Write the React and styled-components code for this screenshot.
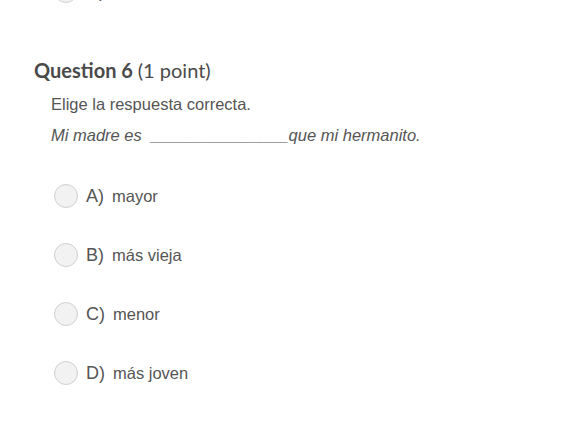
import React from "react";
import styled, { createGlobalStyle } from "styled-components";

const Global = createGlobalStyle`
  html, body { margin: 0; padding: 0; background: #fff; }
  body { font-family: "Liberation Sans", Arial, sans-serif; color: #555; }
`;

const Page = styled.div`
  width: 563px;
  height: 443px;
  overflow: hidden;
  background: #fff;
`;

const Inner = styled.div`
  margin-top: -21px;
  padding-left: 34px;
`;

const PrevOption = styled.div`
  display: flex;
  align-items: center;
  height: 24px;
  padding-left: 20px;
  gap: 8px;
`;

const Heading = styled.h2`
  margin: 53px 0 0;
  font-family: Lato, "Liberation Sans", sans-serif;
  font-size: 20px;
  line-height: 28px;
  font-weight: 700;
  color: #4a4a4a;
`;

const Points = styled.span`
  font-weight: 400;
`;

const Body = styled.div`
  padding-left: 17px;
  margin-top: 9px;
  font-size: 16.5px;
  color: #555;
`;

const Line = styled.p`
  margin: 0 0 9px;
  line-height: 22px;
  font-style: ${(p) => (p.$italic ? "italic" : "normal")};
  &:last-child { margin-bottom: 0; }
`;

const Options = styled.div`
  display: flex;
  flex-direction: column;
  gap: 35px;
  margin-top: 38px;
  padding-left: 20px;
`;

const Option = styled.label`
  display: flex;
  align-items: center;
  height: 24px;
  gap: 8px;
  cursor: pointer;
`;

const Radio = styled.span`
  box-sizing: border-box;
  width: 24px;
  height: 24px;
  border-radius: 50%;
  border: 1px solid #d0d0d0;
  background: #f2f2f2;
  flex: none;
`;

const Letter = styled.span`
  font-size: 18px;
  color: #555;
`;

const Answer = styled.span`
  font-size: 16.5px;
  color: #555;
`;

const options = [
  ["A)", "mayor"],
  ["B)", "más vieja"],
  ["C)", "menor"],
  ["D)", "más joven"],
];

export default function App() {
  return (
    <Page>
      <Global />
      <Inner>
        <PrevOption>
          <Radio />
          <Letter>D)</Letter>
          <Answer>(ninguna de las respuestas gy)</Answer>
        </PrevOption>
        <Heading>
          Question 6 <Points>(1 point)</Points>
        </Heading>
        <Body>
          <Line>Elige la respuesta correcta.</Line>
          <Line $italic>Mi madre es &nbsp;_______________que mi hermanito.</Line>
        </Body>
        <Options>
          {options.map(([l, a]) => (
            <Option key={l}>
              <Radio />
              <Letter>{l}</Letter>
              <Answer>{a}</Answer>
            </Option>
          ))}
        </Options>
      </Inner>
    </Page>
  );
}
